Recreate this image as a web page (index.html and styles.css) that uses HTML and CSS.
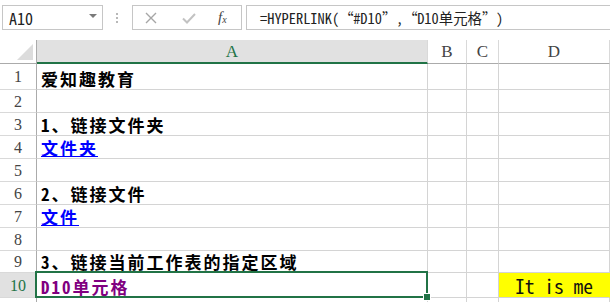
FILE: index.html
```html
<!DOCTYPE html>
<html>
<head>
<meta charset="utf-8">
<link rel="stylesheet" href="styles.css">
</head>
<body>
<div class="toolbar">
  <div class="namebox"><span class="nb-text">A10</span><span class="nb-arrow"></span></div>
  <div class="dots"><i></i><i></i><i></i></div>
  <div class="fxbox">
    <svg class="ico" width="14" height="14" viewBox="0 0 14 14"><path d="M2 2 L12 12 M12 2 L2 12" stroke="#a6a6a6" stroke-width="1.4" fill="none"/></svg>
    <svg class="ico" width="16" height="14" viewBox="0 0 16 14"><path d="M2 7.5 L6 11.5 L14 3" stroke="#c2c2c2" stroke-width="2" fill="none"/></svg>
    <span class="fx">f<sub>x</sub></span>
  </div>
  <div class="formula">=HYPERLINK(<span class="q">“</span>#D10<span class="q">”</span>,<span class="q">“</span>D10单元格<span class="q">”</span>)</div>
</div>
<div class="sheet">
  <div class="hc corner"><svg width="16" height="16" viewBox="0 0 16 16"><path d="M16 0 L16 16 L0 16 Z" fill="#dcdcdc"/></svg></div>
  <div class="hc colsel">A</div>
  <div class="hc">B</div>
  <div class="hc">C</div>
  <div class="hc">D</div>

  <div class="rh r1">1</div><div class="c r1 txt">爱知趣教育</div><div class="c r1"></div><div class="c r1"></div><div class="c r1"></div>
  <div class="rh">2</div><div class="c"></div><div class="c"></div><div class="c"></div><div class="c"></div>
  <div class="rh">3</div><div class="c txt">1、链接文件夹</div><div class="c"></div><div class="c"></div><div class="c"></div>
  <div class="rh">4</div><div class="c txt"><span class="link">文件夹</span></div><div class="c"></div><div class="c"></div><div class="c"></div>
  <div class="rh">5</div><div class="c"></div><div class="c"></div><div class="c"></div><div class="c"></div>
  <div class="rh">6</div><div class="c txt">2、链接文件</div><div class="c"></div><div class="c"></div><div class="c"></div>
  <div class="rh">7</div><div class="c txt"><span class="link">文件</span></div><div class="c"></div><div class="c"></div><div class="c"></div>
  <div class="rh">8</div><div class="c"></div><div class="c"></div><div class="c"></div><div class="c"></div>
  <div class="rh r9">9</div><div class="c r9 txt">3、链接当前工作表的指定区域</div><div class="c r9"></div><div class="c r9"></div><div class="c r9"></div>
  <div class="rh r10 rowsel">10</div><div class="c r10 txt sel"><span class="visited">D10单元格</span><span class="handle"></span></div><div class="c r10"></div><div class="c r10"></div><div class="c r10 yellow">It is me</div>
  <div class="rh"></div><div class="c"></div><div class="c"></div><div class="c"></div><div class="c"></div>
</div>
</body>
</html>
```

FILE: styles.css
```css
html, body {
  margin: 0;
  padding: 0;
  background: #fff;
  width: 610px;
  height: 302px;
  overflow: hidden;
}
.toolbar {
  height: 40px;
  box-sizing: border-box;
  padding: 5px 0 0 2px;
  display: flex;
  align-items: flex-start;
}
.namebox {
  width: 101px;
  height: 25px;
  box-sizing: border-box;
  border: 1px solid #c6c6c6;
  display: flex;
  align-items: center;
  justify-content: space-between;
  padding: 0 5px 0 6px;
}
.nb-text {
  font-family: "Noto Sans Mono CJK SC", "Noto Sans CJK SC", monospace;
  font-size: 16px;
  color: #222;
}
.nb-arrow {
  width: 0;
  height: 0;
  border-left: 4px solid transparent;
  border-right: 4px solid transparent;
  border-top: 4px solid #7a7a7a;
  margin-top: -4px;
}
.dots {
  width: 3px;
  margin: 8px 13px 0 13px;
  display: flex;
  flex-direction: column;
  gap: 2px;
}
.dots i {
  display: block;
  width: 2px;
  height: 2px;
  background: #b8b8b8;
}
.fxbox {
  width: 110px;
  height: 25px;
  box-sizing: border-box;
  border: 1px solid #c6c6c6;
  display: flex;
  align-items: center;
  padding-left: 11px;
}
.fxbox .ico:first-child { margin-right: 23px; }
.fxbox .ico:nth-child(2) { margin-right: 21px; }
.fx {
  font-family: "Liberation Serif", serif;
  font-style: italic;
  font-size: 15px;
  color: #444;
  line-height: 1;
}
.fx sub {
  font-size: 10px;
  vertical-align: -1px;
}
.formula {
  flex: 1;
  margin-left: 4px;
  margin-right: -2px;
  height: 25px;
  box-sizing: border-box;
  border: 1px solid #c6c6c6;
  padding-left: 13px;
  font-family: "Noto Sans Mono CJK SC", "Noto Sans CJK SC", monospace;
  font-size: 14.4px;
  line-height: 23px;
  color: #222;
  white-space: nowrap;
}
.formula .q {
  display: inline-block;
  width: 14px;
  text-align: center;
}
.sheet {
  display: grid;
  grid-template-columns: 37px 391px 39px 32px 111px;
  grid-template-rows: 24px 26px repeat(7, 23px) 22px 25px 23px;
}
.hc {
  border-right: 1px solid #d9d9d9;
  border-bottom: 1px solid #ababab;
  display: flex;
  align-items: center;
  justify-content: center;
  font-family: "Liberation Serif", serif;
  font-size: 17px;
  color: #444;
  padding-top: 1px;
  box-sizing: border-box;
}
.corner {
  justify-content: flex-end;
  align-items: flex-end;
  padding: 0 3px 3px 0;
  border-right: 1px solid #ababab;
}
.colsel {
  background: #e1e1e1;
  border-bottom: 2px solid #217346;
  color: #217346;
}
.rh {
  border-right: 1px solid #ababab;
  border-bottom: 1px solid #d9d9d9;
  display: flex;
  align-items: center;
  justify-content: center;
  font-family: "Liberation Serif", serif;
  font-size: 16px;
  color: #444;
  padding-top: 1px;
  box-sizing: border-box;
}
.rowsel {
  background: #e1e1e1;
  color: #217346;
}
.c {
  border-right: 1px solid #d4d4d4;
  border-bottom: 1px solid #d4d4d4;
  box-sizing: border-box;
}
.txt {
  display: flex;
  align-items: flex-end;
  padding-left: 4px;
  padding-bottom: 0;
  font-family: "Noto Sans Mono CJK SC", "Noto Sans CJK SC", sans-serif;
  font-weight: bold;
  font-size: 17px;
  letter-spacing: 2px;
  line-height: 20px;
  color: #000;
  white-space: nowrap;
}
.link {
  color: #0000ff;
  text-decoration: underline;
  text-decoration-thickness: 1px;
  text-underline-offset: 1px;
}
.visited {
  color: #800080;
}
.sel {
  position: relative;
}
.sel::after {
  content: "";
  position: absolute;
  left: -2px;
  top: -2px;
  right: -1px;
  bottom: -1px;
  border: 2px solid #217346;
  pointer-events: none;
}
.handle {
  position: absolute;
  right: -4px;
  bottom: -4px;
  width: 6px;
  height: 6px;
  background: #217346;
  border: 1px solid #fff;
  z-index: 2;
}
.yellow {
  background: #ffff00;
  border-right-color: #ffff00;
  display: flex;
  align-items: flex-end;
  justify-content: center;
  padding-bottom: 1px;
  font-family: "Noto Sans Mono CJK SC", "Noto Sans CJK SC", monospace;
  font-size: 19.5px;
  line-height: 21px;
  color: #111;
}
```
